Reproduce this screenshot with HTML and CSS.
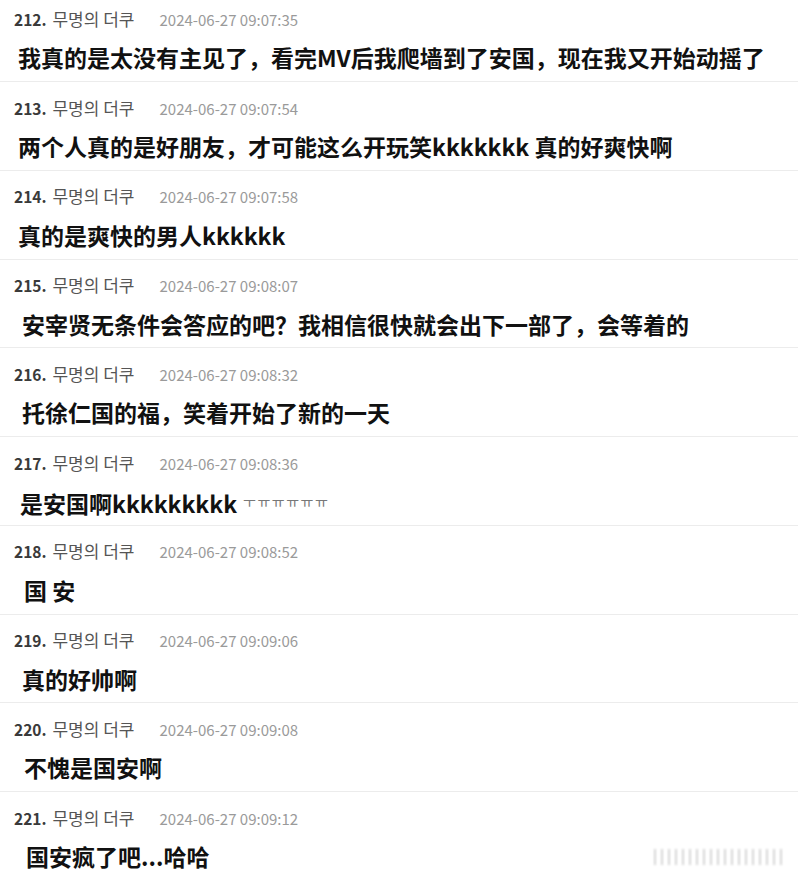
FILE: index.html
```html
<html>
  <head>
    <meta charset="utf-8">
    <title>무명의 더쿠 comments</title>
    <link rel="stylesheet" href="styles.css">
  </head>
  <body>
    <section class="list">
      <div class="comment">
        <p class="meta"><b>212.</b> <span class="name">무명의 더쿠</span><span class="date">2024-06-27 09:07:35</span></p>
        <p class="text">我真的是太没有主见了，看完MV后我爬墙到了安国，现在我又开始动摇了</p>
      </div>
      <div class="comment">
        <p class="meta"><b>213.</b> <span class="name">무명의 더쿠</span><span class="date">2024-06-27 09:07:54</span></p>
        <p class="text">两个人真的是好朋友，才可能这么开玩笑kkkkkkk 真的好爽快啊</p>
      </div>
      <div class="comment">
        <p class="meta"><b>214.</b> <span class="name">무명의 더쿠</span><span class="date">2024-06-27 09:07:58</span></p>
        <p class="text">真的是爽快的男人kkkkkk</p>
      </div>
      <div class="comment">
        <p class="meta"><b>215.</b> <span class="name">무명의 더쿠</span><span class="date">2024-06-27 09:08:07</span></p>
        <p class="text in-4">安宰贤无条件会答应的吧？我相信很快就会出下一部了，会等着的</p>
      </div>
      <div class="comment">
        <p class="meta"><b>216.</b> <span class="name">무명의 더쿠</span><span class="date">2024-06-27 09:08:32</span></p>
        <p class="text in-4">托徐仁国的福，笑着开始了新的一天</p>
      </div>
      <div class="comment">
        <p class="meta"><b>217.</b> <span class="name">무명의 더쿠</span><span class="date">2024-06-27 09:08:36</span></p>
        <p class="text in-2">是安国啊kkkkkkkkk<span class="cry">ㅜㅠㅠㅠㅠㅠ</span></p>
      </div>
      <div class="comment">
        <p class="meta"><b>218.</b> <span class="name">무명의 더쿠</span><span class="date">2024-06-27 09:08:52</span></p>
        <p class="text in-6">国 安</p>
      </div>
      <div class="comment">
        <p class="meta"><b>219.</b> <span class="name">무명의 더쿠</span><span class="date">2024-06-27 09:09:06</span></p>
        <p class="text in-4">真的好帅啊</p>
      </div>
      <div class="comment">
        <p class="meta"><b>220.</b> <span class="name">무명의 더쿠</span><span class="date">2024-06-27 09:09:08</span></p>
        <p class="text in-6">不愧是国安啊</p>
      </div>
      <div class="comment">
        <p class="meta"><b>221.</b> <span class="name">무명의 더쿠</span><span class="date">2024-06-27 09:09:12</span></p>
        <p class="text in-8">国安疯了吧...哈哈</p>
      </div>
    </section>
    <!-- blurred watermark -->
    <div class="mark"></div>
  </body>
</html>
```

FILE: styles.css
```css
body {
  margin: 0;
  background-color: #fff;
  font-family: "Noto Sans CJK KR", "Noto Sans CJK SC", sans-serif;
  overflow: hidden;
}
p { margin: 0; }
.list {
  display: flex;
  flex-direction: column;
  margin-top: -6.75px;
}
.comment {
  padding: 15.5px 0 7.75px;
  border-bottom: 1px solid #ececec;
}
.meta {
  display: flex;
  align-items: baseline;
  padding-left: 14px;
  height: 20px;
  line-height: 20px;
  font-size: 17px;
  color: #555;
}
.meta b {
  color: #3a3a3a;
  font-size: 15.5px;
  font-weight: 700;
  margin-right: 6px;
}
.name { color: #555; }
.date {
  margin-left: 25px;
  font-size: 15px;
  color: #9a9a9a;
}
.text {
  margin-top: 12.5px;
  height: 32px;
  line-height: 32px;
  padding-left: 18px;
  font-family: "Noto Sans CJK SC", sans-serif;
  font-size: 23px;
  font-weight: 700;
  color: #111;
  white-space: nowrap;
}
.in-2 { padding-left: 20px; }
.in-4 { padding-left: 22px; }
.in-6 { padding-left: 24px; }
.in-8 { padding-left: 26px; }
.cry {
  font-family: "Noto Sans CJK KR", sans-serif;
  font-size: 14px;
  font-weight: 400;
  color: #777;
  vertical-align: 6px;
  margin-left: 6px;
  letter-spacing: 1.5px;
}
.mark {
  position: absolute;
  right: 14px;
  bottom: 12px;
  width: 130px;
  height: 16px;
  background: repeating-linear-gradient(90deg, rgba(90,90,90,0.35) 0 2px, rgba(255,255,255,0) 2px 7px);
  filter: blur(1px);
  opacity: 0.7;
}
```
